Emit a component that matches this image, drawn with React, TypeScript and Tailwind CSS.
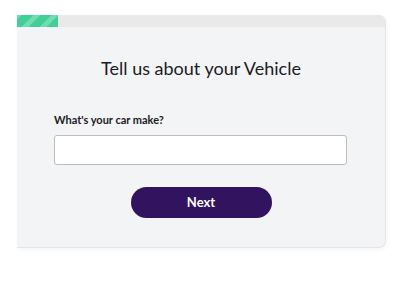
export default function App() {
    return (
        <div className="w-[400px] h-[284px] bg-white pt-[15px] pl-[17px] font-['Lato','Open_Sans',sans-serif]">
            {/* Card */}
            <div className="w-[369px] h-[233px] bg-[#f3f4f6] rounded-tr-[7px] rounded-br-[7px] border-r border-b border-[#e4e5e8] shadow-[1px_2px_4px_rgba(0,0,0,0.04)] overflow-hidden flex flex-col">
                {/* Progress */}
                <div className="h-[12px] w-full bg-[#e9e9ea] shrink-0">
                    <div className="h-full w-[41px] bg-[repeating-linear-gradient(-45deg,#3fcf97_0px,#3fcf97_8px,#6fdcb2_8px,#6fdcb2_13px)]" />
                </div>

                <div className="flex flex-col px-[37px] pt-[29px]">
                    <h1 className="text-center text-[18px] leading-[24px] text-[#1b1b1f]">Tell us about your Vehicle</h1>

                    <label className="mt-[32px] text-[11px] leading-[16px] font-bold text-[#1b1b1f]">What's your car make?</label>
                    <input
                        type="text"
                        className="mt-[7px] w-[293px] h-[30px] bg-white border border-[#bdbdc0] rounded-[3px] px-2 text-sm outline-none"
                    />

                    <div className="flex justify-center mt-[22px]">
                        <button className="w-[141px] h-[31px] rounded-full bg-[#32135f] text-white text-[13px] font-bold">
                            Next
                        </button>
                    </div>
                </div>
            </div>
        </div>
    );
}
